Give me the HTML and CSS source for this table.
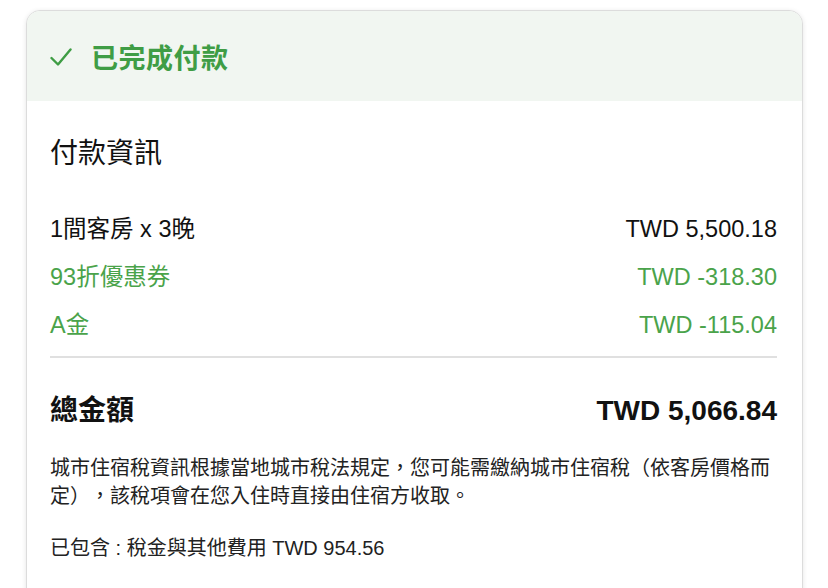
FILE: index.html
```html
<!DOCTYPE html>
<html lang="zh-Hant">
<head>
  <meta charset="UTF-8" />
  <meta name="viewport" content="width=device-width, initial-scale=1.0"/>
  <title>已完成付款</title>
  <link rel="stylesheet" href="styles.css">
</head>
<body>

  <div class="card">
    <div class="card-header">
      <svg class="check" width="22" height="18" viewBox="0 0 22 18">
        <path d="M1.5 10 L8 16.5 L20.5 1.5" fill="none" stroke="#3f9d45" stroke-width="2.4" stroke-linecap="round" stroke-linejoin="round"/>
      </svg>
      <div class="status">已完成付款</div>
    </div>

    <div class="card-body">
      <h2>付款資訊</h2>

      <div class="rows">
        <div class="row">
          <span>1間客房 x 3晚</span>
          <span>TWD 5,500.18</span>
        </div>
        <div class="row discount">
          <span>93折優惠券</span>
          <span>TWD -318.30</span>
        </div>
        <div class="row discount">
          <span>A金</span>
          <span>TWD -115.04</span>
        </div>
      </div>

      <div class="divider"></div>

      <div class="row total">
        <span>總金額</span>
        <span>TWD 5,066.84</span>
      </div>

      <p class="note">
        城市住宿稅資訊根據當地城市稅法規定，您可能需繳納城市住宿稅（依客房價格而定），該稅項會在您入住時直接由住宿方收取。
      </p>
      <p class="included">已包含 : 稅金與其他費用 TWD 954.56</p>
    </div>
  </div>

</body>
</html>
```

FILE: styles.css
```css
* {
  box-sizing: border-box;
}

body {
  font-family: "Liberation Sans", "Noto Sans CJK TC", sans-serif;
  margin: 0;
  padding: 10px 25px 0 26px;
  background: #fff;
  color: #111;
}

.card {
  width: 777px;
  height: 640px;
  border: 1px solid #dcdcdc;
  border-radius: 14px;
  box-shadow: 0 1px 5px rgba(0, 0, 0, 0.10);
  overflow: hidden;
  background: #fff;
}

.card-header {
  height: 90px;
  background: #f1f6f1;
  display: flex;
  align-items: center;
  gap: 19px;
  padding: 0 23px;
}

.check {
  margin-top: 2px;
}

.status {
  font-size: 27px;
  font-weight: bold;
  color: #3f9d45;
  letter-spacing: 0.5px;
}

.card-body {
  padding: 0 25px 0 23px;
}

h2 {
  margin: 35px 0 0;
  font-size: 28px;
  font-weight: normal;
  line-height: 36px;
  color: #111;
}

.rows {
  margin-top: 33px;
}

.row {
  display: flex;
  justify-content: space-between;
  align-items: center;
  font-size: 23.5px;
  line-height: 48px;
}

.row.discount {
  color: #4aa34a;
}

.divider {
  height: 2px;
  background: #e0e0e0;
  margin-top: 7px;
}

.row.total {
  margin-top: 33px;
  line-height: 40px;
  font-size: 28px;
  font-weight: bold;
}

.note {
  margin: 23px 0 0;
  font-size: 20px;
  line-height: 28px;
  text-spacing-trim: space-all;
  color: #222;
}

.included {
  margin: 24px 0 0;
  font-size: 20px;
  line-height: 28px;
  color: #222;
}
```
